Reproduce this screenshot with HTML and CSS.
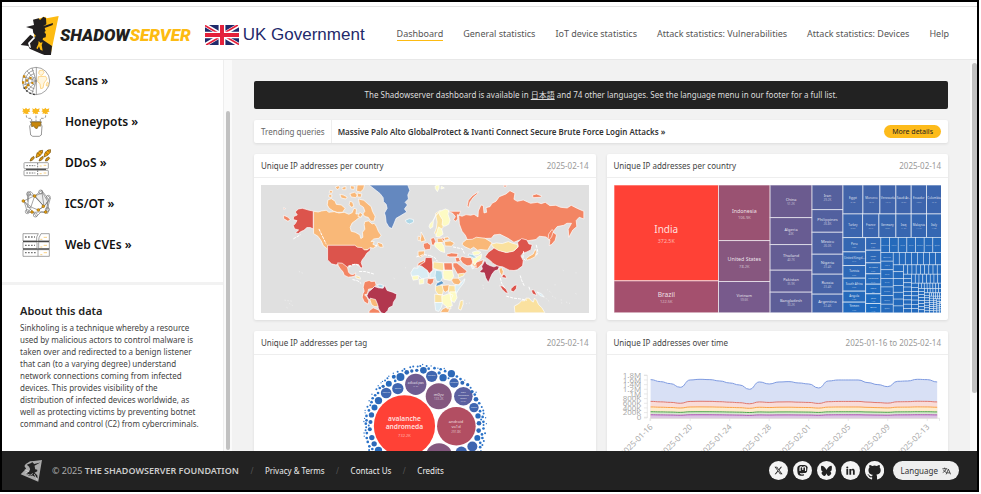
FILE: index.html
```html
<!DOCTYPE html>
<html lang="en">
<head>
<meta charset="utf-8">
<title>Dashboard · The Shadowserver Foundation</title>
<link rel="stylesheet" href="styles.css">
</head>
<body>
<div class="window">
  <header class="top">
    <a class="brand" href="#">
      <svg class="brand-mark" viewBox="6 14 120 120" aria-hidden="true">
        <path fill="#fdbb12" d="M50 28l32-9 4 5 36-7-24 115-30-8-20-30z"/>
        <path fill="#221f20" d="M24 50l24-6-3-16 17-4 4 5 10-10 8 5 1 18-10 6 30-10-1 6-24 9 3 9-4 3 5 7-1 9-8 2-1 5 28 19-4 34-32-12-31-14-4-8-23-3L37 73l11 8 6-4-8-9-2-12z"/>
        <path fill="#fff" d="M47 80l5 2-16 17 3 14-5-2-4-13z"/>
        <path fill="#fdbb12" d="M62 92l5 5 7-1-3 8 3 17-7-3-4-10-4 8-4-2 6-13z"/>
      </svg>
      <span class="brand-name">SHADOW<b>SERVER</b></span>
    </a>
    <a class="gov" href="#">
      <svg class="flag" viewBox="0 0 60 36" preserveAspectRatio="none" aria-hidden="true">
        <path fill="#1f2a6b" d="M0 0h60v36H0z"/>
        <path stroke="#fff" stroke-width="7" d="M0 0l60 36M60 0L0 36"/>
        <path stroke="#e4203a" stroke-width="3" d="M0 1l27 16M60 35L33 19M58 0L33 15M2 36l25-15"/>
        <path stroke="#fff" stroke-width="12" d="M30 0v36M0 18h60"/>
        <path stroke="#e4203a" stroke-width="7" d="M30 0v36M0 18h60"/>
      </svg>
      <span>UK Government</span>
    </a>
    <nav class="menu">
      <a class="on" href="#">Dashboard</a>
      <a href="#">General statistics</a>
      <a href="#">IoT device statistics</a>
      <a href="#">Attack statistics: Vulnerabilities</a>
      <a href="#">Attack statistics: Devices</a>
      <a href="#">Help</a>
    </nav>
  </header>

  <div class="middle">
    <aside class="side">
      <nav class="topics">
        <a href="#">
          <svg viewBox="64 18 90 90" aria-hidden="true" fill="none" stroke="#777" stroke-width="2">
            <circle cx="109" cy="63" r="41"/>
            <path d="M110 22v82M110 63L82 33M110 63L71 50M110 63l-39 12M110 63L82 93M110 63L97 24M110 63l-14 39"/>
            <path d="M106 51a13 13 0 0 0 0 25M104 41a23 23 0 0 0 0 45M102 31a33 33 0 0 0 0 64"/>
            <path stroke="#fbc55c" fill="#fff6df" d="M119 32l9-2 5 7-5 8-5 1-6-6zM116 50l22-1 4 8-9 12-3 15-7 2-2-15-7-6zM143 66l4 3-3 10-5-3z"/>
            <path stroke="none" fill="#c8870c" d="M70 46h7v7h-7zM78 58h7v7h-7zM89 51h7v7h-7zM67 64h7v7h-7zM82 72h7v7h-7zM75 79h7v7h-7zM95 66h6v6h-6z"/>
            <path stroke-dasharray="5 7" stroke-width="4" stroke="#333" d="M72 82q12 20 37 22"/>
          </svg>
          <span>Scans »</span>
        </a>
        <a href="#">
          <svg viewBox="64 142 90 90" aria-hidden="true" fill="none" stroke="#666" stroke-width="2">
            <g stroke="none" fill="#f9b71c">
              <path id="bee" d="M68 146l7 3 4-5 4 5 8-3-2 7 3 3-7 1 2 6-5-1-3 2-3-3-6 2 2-6-5-2 4-3z"/>
              <use href="#bee" x="29"/><use href="#bee" x="58"/>
            </g>
            <path stroke-dasharray="8 4" d="M80 167v2q0 7 8 7h8v8M109 168v16M138 167v2q0 7-8 7h-8v8"/>
            <path d="M91 186h34l-2 6 4 7-2 27-6 4H99l-6-4-3-27 5-7z"/>
            <path stroke="#7d6120" fill="#c8870c" d="M95 187h29l-2 13-5-2-5 9-6-2-3-6-7 2z"/>
          </svg>
          <span>Honeypots »</span>
        </a>
        <a href="#">
          <svg viewBox="64 266 90 90" aria-hidden="true" fill="none" stroke="#777" stroke-width="2">
            <g id="rocket"><path stroke="#6e4a08" fill="#f0a30c" d="M109 293l3-11 9-8 8-1-1 8-8 9-11 5z"/><path d="M113 280l8 8M119 274l7 7" stroke="#6e4a08"/></g>
            <use href="#rocket" x="24" y="-2"/>
            <path stroke="#6e4a08" fill="#d8960f" d="M91 305l3-8 8-6 2 5-6 7zM118 305l3-8 8-6 2 5-6 7zM137 305l2-7 8-5 3 4-6 7z"/>
            <rect x="73" y="310" width="73" height="18" rx="2"/><rect x="73" y="333" width="73" height="16" rx="2"/>
            <path stroke="#333" stroke-width="3" d="M79 330h60"/>
            <path d="M80 319h27M80 341h27M114 311v17M114 333v16" stroke-dasharray="5 3" stroke-width="3"/>
            <path d="M120 320h6M132 318h8M120 343h6M132 341h8" stroke="#f5b94a"/>
          </svg>
          <span>DDoS »</span>
        </a>
        <a href="#">
          <svg viewBox="64 390 90 90" aria-hidden="true" fill="none" stroke="#777" stroke-width="2">
            <path fill="#eee" d="M105 411l24-10 16 28-12 13z"/>
            <path d="M72 426l31-15 30 31-17 11-20-8zM72 426l28 34 38-2 9-37-21-27-21 17-22-7 1 24M82 400l12-2 11 13-12 35-11-2M73 427l6 18 3 14 20 2 8 12 14-14 20 4 4-12-7-22M94 449l-12 13M105 411l28 31 15-19M126 394l7 48-17 11M88 401l-4 43M144 410l8 8-12 42"/>
            <circle cx="87" cy="405" r="6"/><circle cx="123" cy="399" r="6"/><circle cx="146" cy="415" r="6"/><circle cx="83" cy="458" r="6"/><circle cx="107" cy="468" r="6"/><circle cx="143" cy="452" r="6"/>
            <g stroke="#a06c08" fill="#e59f11"><circle cx="105" cy="411" r="4"/><circle cx="71" cy="426" r="4"/><circle cx="131" cy="442" r="4"/><circle cx="116" cy="453" r="4"/><circle cx="97" cy="459" r="4"/><circle cx="138" cy="459" r="4"/></g>
          </svg>
          <span>ICS/OT »</span>
        </a>
        <a href="#">
          <svg viewBox="64 514 90 90" aria-hidden="true" fill="none" stroke="#777" stroke-width="2">
            <path d="M70 525h46l-5 10v12H70zM124 525h25v22h-32l1-10zM70 550h42v20H70zM117 550h32v20h-32zM70 573h79v20H70zM115 573v20"/>
            <path stroke="#333" stroke-width="3" d="M70 548h79M70 571h79"/>
            <path stroke-width="4" stroke-dasharray="5 4" d="M76 535h30M76 560h30M76 582h33"/>
            <path stroke="#f5b94a" d="M122 542h6M132 536h10M122 565h6M132 560h10M122 588h6M132 582h10"/>
          </svg>
          <span>Web CVEs »</span>
        </a>
      </nav>
      <section class="about">
        <h2>About this data</h2>
        <p>Sinkholing is a technique whereby a resource used by malicious actors to control malware is taken over and redirected to a benign listener that can (to a varying degree) understand network connections coming from infected devices. This provides visibility of the distribution of infected devices worldwide, as well as protecting victims by preventing botnet command and control (C2) from cybercriminals.</p>
      </section>
    </aside>
    <div class="rail rail-side"><i></i></div>

    <main class="content">
      <p class="notice">The Shadowserver dashboard is available in <a href="#" lang="ja">日本語</a> and 74 other languages. See the language menu in our footer for a full list.</p>
      <section class="trend">
        <span class="trend-label">Trending queries</span>
        <a class="trend-link" href="#">Massive Palo Alto GlobalProtect &amp; Ivanti Connect Secure Brute Force Login Attacks »</a>
        <button class="more" type="button">More details</button>
      </section>
      <div class="cards">
        <article class="card">
          <header><h3>Unique IP addresses per country</h3><time>2025-02-14</time></header>
          <svg class="chart map" viewBox="33 104 984 384" role="img" aria-label="World map of unique IP addresses">
            <g class="c-can">
              <path d="M191 183l14 2 10-3 14-2 8 6 16-2 14 4 16-2 14 6 10-5 5-13 8 3-2 14 10 0 2 9-12 10-11 8-6 13 3 12 12 3 14 8 3 11 6-4-1-15 7-9-2-14 2-9 11-2 11 9 6-2 7 10 6 15 8 11-6 9-16 2-9 8 10 0-4 8 12 6-11 6-7-1-9 5-10 2-10 8-12-2-8-6-14-4H232l-12-10-6-14-10-14-13-8z"/>
              <path d="M234 149l10-4 12 8 3 9 15 2 12 10-8 12-16 0-12-4-12-8-6-10zM270 132l10 2 12 6-4 6-14-3zM240 120l8 1-2 8-8-2zM256 110l10-4 4 6-8 6zM276 112l12-4 0 10-10 0zM300 130l14-4 10 8-6 8-14-2zM302 106l12 2-2 10-10-3zM322 104h22l-3 12-9 9-12-3zM322 128l14 3-3 10-12-2zM326 146l16 4 10 9 12 10 4 14 8 15-3 14-10 1-8-12-10-2-6-8 6-8-4-12-12-8zM300 153l8 3 4 12-8 3-6-8zM330 186l8 6-4 9-10-3zM238 132l8 2-1 8-9-3zM384 276l14 5 2 10-10 0-8-8z"/>
            </g>
            <g class="c-us">
              <path d="M190 182v54l-9-4-10 0-9 8-9 4-8 6-9-2 10-9-12-3-4-10 6-6 5-9-11-3 1-9 11-5-6-9 9-9 12-2 11 3 10 3z"/>
              <path d="M233 285h82l8 6 14 1 6 7 9 0 11-8-2 10-10 8-6 10-8 10-3 8 4 12-4 6-8-12-12-1-9 5-8-1-8 10-8-9-10-5-14 2-12-3-12-12z"/>
            </g>
            <path class="c-gl" d="M358 104H474l6 16-6 14 2 12-10 10 7 8-9 12 7 9-18 11-14 8-8 20-5 11-9-5-8-14-2-18-3-10 8-14-3-12-8-8-1-12-9-12-10-8z"/>
            <g class="c-ru">
              <path d="M595 183l14 6 8 10-6 10 8 4 5-8-1-12 14 5 12-5 14 2 10-3 12 8 1-18 8-18 7 2 2 22 8-2-2-14 12-3 6-10 12-6 10-14 20-8 12-10 15 8-3 18 10 6 18-4 22 10 20-3 12 4 12-4 14 10 18-1 14 6 20 2 12-8 20 10 18 8v23l-14-5-9 10 2 18-12 10-12 22-2-24 10-18-14 0-9 6-20 4-13 16 11 9-4 16-10 12-8 4 2-17-12-9-20-2-10 10-30 4-16-4-20 8-18-12-24-12-18 2-8 10-34 1-8 14-12 2-16-8-8-18-10-12-8-22-2-24 6-14z"/>
              <path d="M652 168l4-18 12-14 18-12-3 7-12 10-10 14-4 16zM849 134l12-3 16 6-5 4-22 1zM896 265l1-13 10-14 5 4-6 18-8 10zM762 105l10 0-3 5-6 0zM101 195l12 5 8 8-7 5-13-8zM101 172l6 3-6 2z"/>
              <path d="M263 338l14 1 8 6 8 7 3 14 6 6 8 1 8-5-3 10-10 2-10 1-12-6-4-11-8-8-6-10z"/>
              <path d="M344 395l14-4 6 3 12-1 3 12-11 10-12 2-3 14-9 3 8 8 5 10-2 10-12-7-6-14 2-10 4-8-3-12z"/>
              <path d="M358 482l12-9 17 7 5 9H357zM506 338l16-7 4 6-16 12-8 0zM543 265l10-3 5 12-4 10-8 0zM521 280l12-3 10 8-1 12-16 2-5-10zM533 386l20-1-3 13-8 6-10-5zM591 312l14-4 20 2-3 10-22 0-9-3zM582 338l25 0 2 22-25 0zM610 338l12 0 12 10 18 15-10 11-16 2-8-14-8-14zM636 318l14 4 14 0 6 14-6 10-12 1-13-8-8-12zM680 336l22-8-4 12-14 14-12-2zM616 322l12 0 4 11-12 3zM575 262l12 4-5 6-9-3z"/>
            </g>
            <g class="c-dk">
              <path d="M706 320l10-14 14-10 10-12 4 14 24 8 26-5 12-12-2-12 12-12 16 4 6 12 10 2-4 16-12 6-12 4-6 8 7 14-2 16-16 12-10 2-14-1-12-6-8-4-14-2-16-9-6-7z"/>
              <path d="M527 322l20 0 2 22 0 16-10 9-22-16-8-8 16-10zM750 406l10 2 10 10 6 12-8-2-10-10zM784 416l10-10 8-2-2 12-8 9-8-3zM845 420l8-1 6 10 2 7-12-5zM755 372l12 2 5 10-14-2z"/>
            </g>
            <path class="c-in" d="M706 329l5 12 10 5 12 4 8-3 8 2-4 10-10 3-8 10-7 16-4 9-8-14-4-15-9 0-5-5 8-6-2-9 5-8z"/>
            <path class="c-in" d="M356 425l10-8 8-8 12 4 14 1 5-8 7 15 16 5 13 6-2 12-8 12-2 11-12 6-3 8-10 10-10-3-7-11-4-10-9-11-10-5-8-5-5-9z"/>
            <g class="c-or">
              <path d="M638 278l12-10 18-1 12-6 26 3 22 14-6 8-8 14-22-2-8 2-12-9-10 6-18-8-6-6zM562 264l14 0 6 12-18 2zM505 303l20-1-3 14-10 5-7-4zM514 245l7 12 6 14-13 4-3-8 3-8zM505 258l6 1 0 12-6 0zM748 356l8-4 5 12-3 14-7-10zM361 444l16 4 6 14 2 8-12-1-8-6-4-12zM572 487l6-10 12-6 10 4-4 12zM608 384l18 0 8 11-8 10-14-4-6-9zM584 274l18-2 12 6-8 10-20-1zM830 325l9-7 12-7 6-14 4 8-5 15-12 6-12 4zM583 262l12-2 4 7-14 3zM668 336l10 4 2 10-12-4zM577 406l22-2-2 16-10 6-10-8z"/>
            </g>
            <g class="c-ye">
              <path d="M724 282l16-4 18 2 18-6 12 5 16 4 1 8-14 12-20 4-24-6-14-8zM794 468l14-8 8-8 10 0 3-8 10 0 4 6 8 6 4-12 6 6 6 13 10 10 9 15H796zM551 335l30 3 1 24-20-4-12-4zM557 190l14-10 5 4-4 10 10 18-2 19-10 12-10 10-6-4 6-16 2-18zM557 405l20 0 4 15-3 15-13-2-8-12zM555 432l24 2 4 23-28 0zM598 406l20 1 4 13-12 11-14-4zM632 452l8-2 0 12-6 18-8-4zM626 371l18-2-2 8-16 6zM318 376l12 4 2 7-14-4zM590 470l12-2 2 8-12 0z"/>
            </g>
            <g class="c-ly">
              <path d="M541 220l8-8 8-14 12-14 18-8 10 4-2 12 6 18-4 12-12 6-8-4 2-15-8-12-4-10-10 10-6 15-2 18-8 5-3-7zM556 107l12-4 0 10-5 11-6-9zM575 108l9 5-10 3zM566 230l10 6 4 16-12 8-10-2zM580 360l28 1 4 18-10 12-20-4-2-14zM555 278l20-1 8 12 2 18-13-4-16-14zM670 322l14-3 12-8-2 14-12 8-8 12-4-10zM576 438l22-8 12 5-6 12 4 20-14 5-8-6-9-8zM486 376l20-1 0 12-16 3zM508 388l14-3 0 15-13 2zM600 425l18 0 4 18-8 14-10-6zM668 306l14-4 12 4-8 7-14 2z"/>
            </g>
            <g class="c-lb">
              <path d="M492 353l12 1 2-8 10 2 18 14 3 20-21 4-10-10-20 2-3-10zM541 372l10-13 10-1-3 23-18 3zM555 457l24 0-4 14-8 13-9-3zM616 404l14 0 12-16 4-2-4 12-14 18-8 14-4-12zM664 343l10 10-6 3zM862 425l14 6 8 10-13-5z"/>
            </g>
            <g class="c-mb">
              <path d="M467 210l12-5 12 3 0 8-12 5-9-4zM558 360l18 3 3 18-7 14-12-2-4-16zM657 311l12 2 12 9-8 2-18-8zM383 403l8-1 10 4-4 7-11-2z"/>
              <path fill="#5d98c9" d="M561 399l14-7 9 7-14 6-12 4z"/>
            </g>
            <g class="c-none">
              <path d="M130 266l22-13M207 236l22 46M297 351l10-8 14 0 8 6M328 364l18 0 28 8M375 288l12-6M308 388l16 4 10 8M752 383l4 16 10 16M770 438l22 6 18 2 22 4M812 376l4 14 8 17M838 410l4 12M822 303l-2 20 8 8M860 284l5 22-6 12M541 316l14 6 8 11M500 320l22-7 18 3M610 290l28 6 6 14"/>
              <path class="spk" d="M147 364l12 5M104 450l22 3M118 460l10 6M110 472l6 3M940 360l3 2M893 418l14 12M908 438l10 6M935 448l2 16M950 456l12 4M978 368h3M915 404h3M978 430l4 2M640 462l24-4M700 404l2 12M466 352l4 2M432 384l3 2M890 445l10 10"/>
            </g>
          </svg>
        </article>
        <article class="card">
          <header><h3>Unique IP addresses per country</h3><time>2025-02-14</time></header>
          <svg class="chart" id="treemap" viewBox="42 105 984 384" role="img" aria-label="Treemap of unique IP addresses per country"></svg>
        </article>
        <article class="card">
          <header><h3>Unique IP addresses per tag</h3><time>2025-02-14</time></header>
          <svg class="chart" id="bubbles" viewBox="33 125 984 384" role="img" aria-label="Bubble chart of unique IP addresses per tag"></svg>
        </article>
        <article class="card">
          <header><h3>Unique IP addresses over time</h3><time>2025-01-16 to 2025-02-14</time></header>
          <svg class="chart" id="series" viewBox="42 125 984 384" role="img" aria-label="Unique IP addresses over time"></svg>
        </article>
      </div>
    </main>
    <div class="rail rail-main"><i></i></div>
  </div>

  <footer class="foot">
    <svg class="foot-mark" viewBox="60 568 68 68" aria-hidden="true">
      <path fill="#aaa" d="M77 583l13-8 11-1 24-3-11 64-52-22 16-16-5-8z"/>
      <path fill="#222" d="M80 585l13-5 3-3 6 6 18-5-17 10 2 10 6 2 0 4-8 5 8 7 1 9-15-8-9 1-12-7 11-5 3-8-3-7z"/>
      <path fill="none" stroke="#ddd" stroke-width="2" d="M74 600l12 4-10 6 14 6 8-5M102 612l9 18"/>
    </svg>
    <span class="copy">© 2025 <b>THE SHADOWSERVER FOUNDATION</b></span>
    <nav class="legal">
      <i>/</i><a href="#">Privacy &amp; Terms</a><i>/</i><a href="#">Contact Us</a><i>/</i><a href="#">Credits</a>
    </nav>
    <div class="social">
      <a href="#" aria-label="X"><svg viewBox="0 0 24 24"><path d="M18.2 2.3h3.3l-7.2 8.2 8.5 11.2h-6.7l-5.2-6.8-6 6.8H1.700l7.700-8.800L1.300 2.300h6.800l4.700 6.200zm-1.200 17.500h1.800L7.100 4.100H5.100z"/></svg></a>
      <a href="#" aria-label="Mastodon"><svg class="big" viewBox="0 0 24 24"><path d="M23.300 5.300c-.4-2.600-2.600-4.600-5.300-5C17.500.200 15.800 0 11.800 0 7.800 0 7 .2 6.500.3 3.900.7 1.600 2.500 1 5 .500 7.500.7 11.100.8 13.100c.2 2 .3 3.900.9 5.800.6 1.900 2.300 3.500 4.200 4.200 2 .7 4.200.8 6.300.3 1.700-.4 3.300-1.100 3.200-1.200l-.1-1.800s-1.900.6-4 .5c-2.100-.1-4.300-.2-4.700-2.800v-.7c4 1 7.500.7 9.900.3 2.700-.3 5.100-2 5.400-3.500.5-2.400.5-5.900 1.400-8.900zM19.900 13.100h-2.500v-6c0-2.600-3.500-2.700-3.500.3v3.300h-2.500V7.400c0-3-3.500-2.900-3.500-.3v6H5.400V6.700c0-4.400 4.900-5.500 7.200-2.100 2.300-3.400 7.300-2.300 7.300 2.100z"/></svg></a>
      <a href="#" aria-label="Bluesky"><svg class="big" viewBox="0 0 24 24"><path d="M12 10.800C10.900 8.700 8 4.700 5.200 2.800 2.600 1 0 .9 0 4.300c0 .7.400 5.700.6 6.500.8 2.800 3.600 3.500 6.200 3.100-4.400.7-8.300 2.200-3.200 7.900 5.600 5.800 7.700-1.300 8.400-3.600.7 2.300 2.400 9.200 8.200 3.600 4.500-4.500 1.200-7.200-3.200-7.900 2.600.4 5.400-.3 6.200-3.100.2-.8.600-5.800.6-6.500 0-3.400-2.600-3.300-5.200-1.500C16 4.700 13.100 8.700 12 10.800z"/></svg></a>
      <a href="#" aria-label="LinkedIn"><svg viewBox="0 0 24 24"><path d="M1 8h4.800v15H1zM3.400 1a2.700 2.700 0 1 1 0 5.500 2.700 2.700 0 0 1 0-5.500zM9 8h4.500v2c2-3.600 9.800-3.800 9.800 3.500V23h-4.800v-8.500c0-4-4.700-3.700-4.700 0V23H9z"/></svg></a>
      <a class="hub" href="#" aria-label="GitHub"><svg viewBox="0 0 24 24"><path d="M12 0a12 12 0 0 0-3.800 23.400c.6.100.8-.3.800-.6v-2.200c-3.300.7-4-1.400-4-1.400-.6-1.400-1.400-1.800-1.400-1.800-1-.7.100-.7.100-.7 1.200.1 1.900 1.200 1.900 1.200 1 1.800 2.800 1.300 3.500 1 .1-.8.400-1.300.8-1.600-2.700-.3-5.500-1.300-5.500-6 0-1.200.5-2.300 1.300-3.100-.2-.4-.6-1.600 0-3.200 0 0 1-.4 3.400 1.200a11.500 11.500 0 0 1 6 0c2.300-1.600 3.300-1.200 3.300-1.200.7 1.600.3 2.800.1 3.200.8.800 1.300 1.900 1.300 3.200 0 4.600-2.800 5.600-5.500 5.900.5.400.9 1.100.9 2.200v3.300c0 .3.200.7.800.6A12 12 0 0 0 12 0z"/></svg></a>
    </div>
    <button class="lang" type="button">Language
      <svg viewBox="0 0 24 20" aria-hidden="true" fill="none" stroke="#222" stroke-width="2"><path d="M1 4h13M7 1v3M11 4c-1 5-5 8-9 10M4 7c2 4 5 6 8 7M11 19l6-14 6 14M13 15h8"/></svg>
    </button>
  </footer>
</div>
<script src="charts.js"></script>
</body>
</html>
```
FILE: styles.css
```css
* { box-sizing: border-box; }
body {
  margin: 0;
  background: #fff;
  color: #222;
  font: 8px/12px "Noto Sans", "Open Sans", "Noto Sans CJK JP", sans-serif;
}
a { color: inherit; text-decoration: none; }
h2, h3, p { margin: 0; }
i { font-style: normal; }
button { font: inherit; color: inherit; border: 0; padding: 0; }

.window {
  height: calc(100vh - 2px);
  margin-right: 2px;
  border: 2px solid #000;
  display: flex;
  flex-direction: column;
}

/* header */
.top {
  flex: none;
  height: 58px;
  display: flex;
  align-items: center;
  padding: 8px 28px 0 18px;
  border-bottom: 1px solid #e8e8e8;
  background: linear-gradient(#fff 4px, #e4e4e4 4px, #e4e4e4 5px, #fff 5px);
}
.brand { display: flex; align-items: center; }
.brand-mark { width: 40px; height: 40px; }
.brand-name {
  font: italic 900 17px/20px Roboto, sans-serif;
  color: #221f20;
}
.brand-name b { font-weight: 900; color: #fdbb12; }
.gov {
  display: flex;
  align-items: center;
  gap: 4px;
  margin-left: 14px;
  font: 17px/20px "Liberation Sans", Arial, sans-serif;
  color: #1f2a6b;
}
.flag { width: 34px; height: 20px; }
.menu {
  display: flex;
  gap: 20px;
  margin-left: auto;
  font-size: 9px;
  color: #555;
  white-space: nowrap;
}
.menu .on { border-bottom: 1px solid #fdbb12; }

/* middle */
.middle { flex: 1; min-height: 0; display: flex; background: #f2f2f2; overflow: hidden; }
.side { flex: none; width: 221px; background: #fff; overflow: hidden; }
.topics { padding-bottom: 17px; border-bottom: 3px solid #f2f2f2; }
.topics a {
  display: flex;
  align-items: center;
  gap: 14px;
  height: 41px;
  padding-left: 19px;
  font-size: 12px;
  font-weight: 600;
  color: #111;
}
.topics svg { width: 30px; height: 30px; }
.about { padding: 18px 23px 18px 18px; color: #444; }
.about h2 { margin-bottom: 3px; font-size: 11px; line-height: 16px; font-weight: 600; color: #222; }

.rail { flex: none; background: #fafafa; }
.rail i { display: block; border-radius: 3px; background: #c1c1c1; }
.rail-side { width: 9px; padding: 51px 2px 1px; border-left: 1px solid #eee; }
.rail-side i { height: 100%; }
.rail-main { width: 7px; padding: 3px 0 0 2px; }
.rail-main i { height: 85%; }

.content { flex: 1; min-width: 0; overflow: hidden; padding: 21px 22px 0; }
.notice {
  margin-bottom: 11px;
  padding: 8px;
  border-radius: 2px;
  background: #222;
  color: #ddd;
  text-align: center;
}
.notice a { text-decoration: underline; }
.trend, .card { background: #fff; border-radius: 2px; box-shadow: 0 1px 3px #00000018; }
.trend { display: flex; align-items: center; height: 23px; margin-bottom: 11px; padding-right: 7px; }
.trend-label { padding: 6px 6px 5px 7px; border-right: 1px solid #eee; color: #666; }
.trend-link { flex: 1; padding-left: 6px; font-weight: 600; color: #333; }
.more { height: 13px; padding: 0 8px; border-radius: 7px; background: #fdbb1b; font-size: 7px; line-height: 13px; }
.cards { display: grid; grid-template-columns: 1fr 1fr; gap: 11px; }
.card { padding-bottom: 7px; }
.card header {
  display: flex;
  justify-content: space-between;
  padding: 6px 7px 5px;
  border-bottom: 1px solid #eee;
  color: #444;
}
.card h3 { font: inherit; }
.card time { color: #999; }
.chart { display: block; width: calc(100% - 14px); margin: 7px 7px 0; }

/* map */
.map { background: #e0e0e0; }
.map path { stroke: #fff; stroke-width: 2; stroke-linejoin: round; }
.c-can, .c-or { fill: #f9b878; }
.c-us, .c-dk { fill: #dc544c; }
.c-gl { fill: #6488bf; }
.c-ru { fill: #f38563; }
.c-in { fill: #b2374e; }
.c-ye { fill: #fae19f; }
.c-ly { fill: #fdfbc4; }
.c-lb { fill: #d9ecf3; }
.c-mb { fill: #add7e7; }
.map .c-none path { fill: none; stroke-width: 3; stroke-dasharray: 9 3; }
.map .c-none .spk { stroke: #eee; stroke-dasharray: 3 6; }

/* charts */
#treemap rect { stroke: #fff; stroke-opacity: 0.6; stroke-width: 3; }
#treemap .tail { stroke-width: 2; }
#treemap text, #bubbles text { fill: #fff; fill-opacity: 0.85; text-anchor: middle; }
.t-xl { font-size: 30px; }
.t-l { font-size: 20px; }
.t-m { font-size: 16px; }
.t-s { font-size: 12px; }
.t-xs { font-size: 9px; }
.t-xxs { font-size: 6px; }
#bubbles .t-l { font-weight: 600; }
#treemap .dim, #bubbles .dim { fill-opacity: 0.6; }
#series text { font-size: 24px; fill: #aaa; text-anchor: end; }
#series .axis { fill: none; stroke: #ddd; stroke-width: 2; }

/* footer */
.foot {
  flex: none;
  height: 39px;
  display: flex;
  align-items: center;
  padding: 0 18px;
  background: #222;
  color: #ddd;
  white-space: nowrap;
}
.foot-mark { width: 23px; height: 23px; margin-right: 9px; }
.copy { font-size: 9px; color: #aaa; }
.copy b { font-weight: 600; color: #ccc; }
.legal { display: flex; }
.legal a { color: #eee; }
.legal i { width: 26px; text-align: center; color: #555; }
.social { display: flex; gap: 5px; margin-left: auto; }
.social a {
  width: 19px;
  height: 19px;
  border-radius: 50%;
  background: #f4f4f4;
  display: flex;
  align-items: center;
  justify-content: center;
}
.social svg { width: 9px; height: 9px; fill: #222; }
.social .big { width: 11px; height: 11px; }
.social .hub { background: none; }
.social .hub svg { width: 19px; height: 19px; fill: #f4f4f4; }
.lang {
  display: flex;
  align-items: center;
  gap: 4px;
  height: 19px;
  margin-left: 9px;
  padding: 0 8px;
  border-radius: 10px;
  background: #eee;
  color: #333;
}
.lang svg { width: 9px; height: 8px; }
```
FILE: charts.js
```js
const NS = "http://www.w3.org/2000/svg";
function add(parent, tag, attrs, text) {
  const el = document.createElementNS(NS, tag);
  for (const k in attrs) el.setAttribute(k, attrs[k]);
  if (text) el.textContent = text;
  parent.appendChild(el);
  return el;
}
// Blend from the low (blue) to the high (red) end of the scale.
function shade(t) {
  const lo = [30, 107, 192], hi = [176, 77, 100];
  return "rgb(" + lo.map((v, i) => Math.round(v + (hi[i] - v) * t)).join() + ")";
}

/* Treemap */
const tree = document.getElementById("treemap");
function cell(x0, y0, x1, y1, fill, name, value, size, small) {
  add(tree, "rect", { x: x0, y: y0, width: x1 - x0, height: y1 - y0, fill });
  const cx = (x0 + x1) / 2, cy = (y0 + y1) / 2;
  if (name) add(tree, "text", { x: cx, y: cy, class: size }, name);
  if (value) add(tree, "text", { x: cx, y: cy + (size === "t-xl" ? 29 : size === "t-m" || size === "t-l" ? 20 : 11), class: small + " dim" }, value);
}
function column(x0, x1, ys, t, names, size, small) {
  for (let i = 0; i < ys.length - 1; i++) {
    const n = names[i] || [];
    cell(x0, ys[i], x1, ys[i + 1], shade(t - i * 0.025), n[0], n[1], size, small);
  }
}
function row(y0, y1, xs, t, names, size, small) {
  for (let i = 0; i < xs.length - 1; i++) {
    const n = names[i] || [];
    cell(xs[i], y0, xs[i + 1], y1, shade(t - i * 0.01), n[0], n[1], size, small);
  }
}
cell(42, 105, 356, 393, "#ff4136", "India", "372.5K", "t-xl", "t-m");
cell(42, 393, 356, 489, "#a4506e", "Brazil", "122.5K", "t-l", "t-s");
cell(356, 105, 511, 272, "#9a5272", "Indonesia", "106.9K", "t-m", "t-s");
cell(356, 272, 511, 395, "#87577f", "United States", "78.2K", "t-m", "t-s");
cell(356, 395, 511, 489, "#785a8c", "Vietnam", "59.6K", "t-s", "t-xs");
column(511, 637, [105, 203, 284, 361, 427, 489], 0.53,
  [["China", "51.2K"], ["Algeria", "43K"], ["Thailand", "40.7K"], ["Pakistan", "35.9K"], ["Bangladesh", "33.2K"]], "t-s", "t-xs");
column(637, 730, [105, 179, 247, 313, 373, 433, 489], 0.38,
  [["Iran", "29.2K"], ["Philippines", "26.8K"], ["Mexico", "26.0K"], ["Nigeria", "23.4K"], ["Russia", "23.4K"], ["Argentina", "22.4K"]], "t-s", "t-xs");
row(105, 192, [730, 790, 841, 889, 935, 981, 1026], 0.25,
  [["Egypt", "21.0K"], ["Morocco", "18.4K"], ["Venezuela", "17.1K"], ["Saudi Ar…", "16.6K"], ["Ecuador", "16.6K"], ["Colombia", "15.4K"]], "t-xs", "t-xxs");
row(192, 263, [730, 789, 838, 889, 935, 981, 1026], 0.2,
  [["Turkey", "15.5K"], ["France", "13.1K"], ["Germany", "12.6K"], ["Iraq", "11.9K"], ["Malaysia", "11.4K"], ["Italy", "11.2K"]], "t-xs", "t-xxs");
column(730, 798, [263, 306, 347, 385, 424, 457, 489], 0.15,
  [["Peru", "9.8K"], ["United Kingd…", "9.1K"], ["Tunisia", "8.6K"], ["South Africa", "8.6K"], ["Angola", "7.8K"], ["Yemen", "7.2K"]], "t-xs", "t-xxs");
column(798, 844, [263, 301, 339, 372, 403, 432, 461, 489], 0.12,
  [["Spain", "6.8K"], ["Nepal", "6.2K"], ["Sri Lanka", "5.5K"], ["Kazakhstan", "5.1K"], ["Kenya", "5K"], ["Japan", "4.9K"], ["Bolivia", "4.4K"]], "t-xxs", "t-xxs");

// The long tail: strips that alternate between the top and the left edge.
const tail = { x: 844, y: 263 };
const X1 = 1026, Y1 = 489;
const steps = [45, 37, 37, 31, 28, 24, 27, 21, 16, 18, 13, 15, 10, 12, 8, 10, 8, 8, 7, 8, 6, 7, 6];
const sides = [26, 26, 19, 20, 13, 13, 11, 12, 9, 9, 8, 8];
steps.forEach((d, n) => {
  const across = n % 2 === 0;
  const span = across ? X1 - tail.x : Y1 - tail.y;
  const count = Math.max(2, Math.round(span / (sides[n] || 6)));
  for (let i = 0; i < count; i++) {
    const a = span * i / count, b = span / count;
    const r = across
      ? { x: tail.x + a, y: tail.y, width: b, height: d }
      : { x: tail.x, y: tail.y + a, width: d, height: b };
    add(tree, "rect", Object.assign(r, { class: "tail", fill: shade(0.05 - n * 0.002) }));
    if (n < 2) add(tree, "text", { x: r.x + r.width / 2, y: r.y + r.height / 2 + 2, class: "t-xxs dim" }, ["Belgium", "Libya", "Chile", "Syria", "Ghana", "Oman", "Qatar", "Cuba"][i % 8]);
  }
  if (across) tail.y += d; else tail.x += d;
});

/* Bubbles */
const bub = document.getElementById("bubbles");
const placed = [];
function bubble(cx, cy, r, fill) {
  add(bub, "circle", { cx, cy, r, fill });
  placed.push([cx, cy, r]);
}
bubble(464, 317, 92, "#ff4136");
bubble(620, 318, 58, "#b24e62");
bubble(567, 228, 39, "#84587f");
bubble(498, 192, 32, "#6f5c91");
bubble(641, 228, 28, "#5b60a0");
bubble(568, 409, 40, "#84587f");
[[444, 205, 17], [409, 218, 16], [452, 170, 12], [417, 190, 9], [471, 156, 7], [521, 150, 10], [546, 168, 17],
 [580, 172, 11], [605, 160, 11], [613, 188, 14], [638, 187, 6], [386, 241, 11], [374, 262, 9], [365, 284, 8],
 [362, 305, 6], [360, 327, 6], [366, 352, 8], [373, 371, 8], [386, 391, 11], [673, 262, 14], [679, 237, 7],
 [685, 287, 8], [688, 309, 7], [687, 331, 7], [683, 353, 9], [668, 379, 15], [635, 396, 17], [654, 193, 5],
 [667, 214, 5], [400, 198, 5], [432, 169, 6], [486, 152, 5], [501, 150, 5]].forEach(([x, y, r], i) =>
  bubble(x, y, r, r > 12 ? "#3f66b0" : i % 3 ? "#2d69b8" : "#266abc"));
// Small dots scatter in a ring round the large bubbles and shrink outward.
let seed = 7;
const rand = () => (seed = (seed * 16807) % 2147483647) / 2147483647;
[[5, 158, 170, 900], [4, 162, 178, 1500], [3, 160, 183, 2500], [2, 172, 186, 400]].forEach(([r, from, to, tries]) => {
  for (let i = 0; i < tries; i++) {
    const a = rand() * Math.PI * 2, R = from + rand() * (to - from);
    const x = 525 + R * Math.cos(a), y = 318 + R * Math.sin(a);
    if (placed.every(p => Math.hypot(p[0] - x, p[1] - y) > p[2] + r + 2)) bubble(x, y, r, "#2a72c8");
  }
});
[[464, 303, "t-l", "avalanche"], [464, 327, "t-l", "andromeda"], [464, 351, "t-s dim", "732.2K"],
 [619, 307, "t-s", "android"], [619, 323, "t-s", "vo1d"], [619, 339, "t-xs dim", "291.8K"],
 [567, 226, "t-s", "m0yv"], [567, 238, "t-xs dim", "133.2K"],
 [498, 191, "t-xs", "adload.pws"], [498, 201, "t-xxs dim", "91.3K"],
 [641, 217, "t-xxs", "m0yv"], [641, 226, "t-xxs", "andromeda"], [641, 235, "t-xxs", "others"], [641, 244, "t-xxs dim", "69.3K"],
 [444, 206, "t-xxs", "necurs"], [409, 219, "t-xxs", "ranbyus"], [546, 168, "t-xxs", "qsnatch"], [613, 189, "t-xxs", "nymaim"], [673, 263, "t-xxs", "gamut"]]
  .forEach(([x, y, c, s]) => add(bub, "text", { x, y, class: c }, s));

/* Time series */
const ser = document.getElementById("series");
const top0 = [178, 184, 190, 201, 179, 177, 178, 182, 188, 194, 207, 185, 191, 185, 184, 188, 191, 203, 182, 179, 179, 179, 187, 193, 199, 183, 182, 177, 178, 185];
const X = i => 152 + i * 861 / 29;
function curve(ys) {
  let d = "M" + X(0) + " " + ys[0];
  for (let i = 1; i < ys.length; i++) {
    const m = (X(i - 1) + X(i)) / 2;
    d += "C" + m + " " + ys[i - 1] + " " + m + " " + ys[i] + " " + X(i) + " " + ys[i];
  }
  return d;
}
[["#7d9ae0", "#d8e0f5", 0, 1], ["#e0766c", "#f9dcd8", 245, 0.25], ["#fba347", "#fdebcc", 261, 0.14],
 ["#4ca64c", "#d6e8cf", 275, 0.08], ["#b04fb5", "#dcc3e4", 284, 0.06]].forEach(([line, fill, base, k]) => {
  const ys = base ? top0.map(v => base + (v - 185) * k) : top0;
  const d = curve(ys);
  add(ser, "path", { d: d + "V294H152Z", fill });
  add(ser, "path", { d, fill: "none", stroke: line, "stroke-width": 3 });
});
let ticks = "M132 165H142V293H132M150 302V294H1020V302";
const yl = ["1.8M", "1.6M", "1.4M", "1.2M", "1M", "800K", "600K", "400K", "200K", "0"];
yl.forEach((s, i) => {
  const y = 165 + i * 14;
  ticks += "M132 " + y + "H142";
  add(ser, "text", { x: 124, y: y + 8 }, s);
});
["2025-01-16", "2025-01-20", "2025-01-24", "2025-01-28", "2025-02-01", "2025-02-05", "2025-02-09", "2025-02-13"].forEach((s, i) => {
  const x = X(i * 4);
  ticks += "M" + x + " 294V302";
  add(ser, "text", { transform: "translate(" + (x + 8) + " 322) rotate(-45)" }, s);
});
add(ser, "path", { d: ticks, class: "axis" });
```
